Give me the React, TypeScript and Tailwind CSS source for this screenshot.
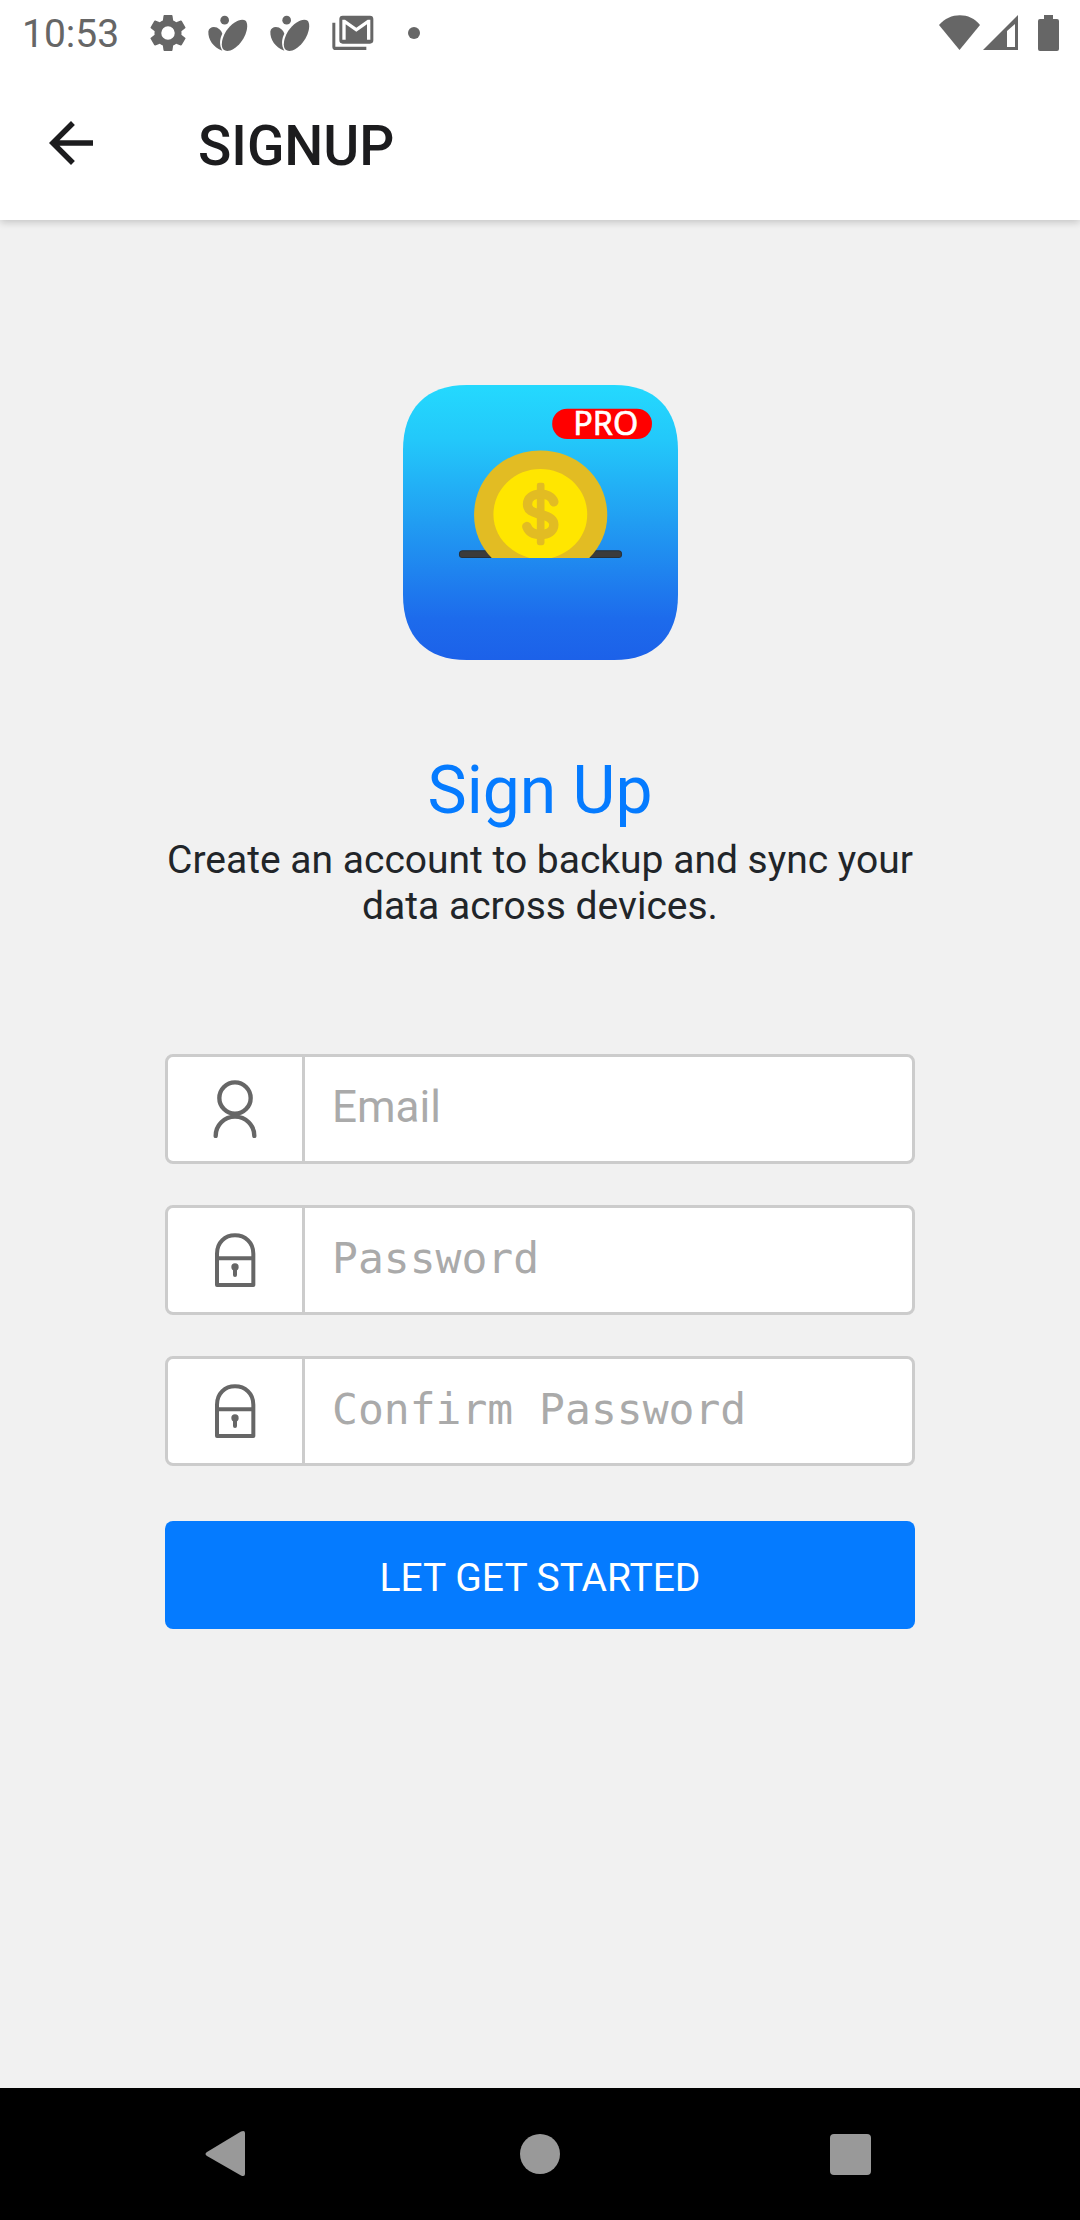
import React from "react";

const settingsPath =
  "M19.14 12.94c.04-.3.06-.61.06-.94 0-.32-.02-.64-.07-.94l2.03-1.58a.49.49 0 0 0 .12-.61l-1.92-3.32a.49.49 0 0 0-.59-.22l-2.39.96c-.5-.38-1.03-.7-1.62-.94l-.36-2.54a.48.48 0 0 0-.48-.41h-3.84c-.24 0-.43.17-.47.41l-.36 2.54c-.59.24-1.13.57-1.62.94l-2.39-.96a.48.48 0 0 0-.59.22L2.74 8.87a.47.47 0 0 0 .12.61l2.03 1.58c-.05.3-.09.63-.09.94s.02.64.07.94l-2.03 1.58a.49.49 0 0 0-.12.61l1.92 3.32c.12.22.37.29.59.22l2.39-.96c.5.38 1.03.7 1.62.94l.36 2.54c.05.24.24.41.48.41h3.84c.24 0 .44-.17.47-.41l.36-2.54c.59-.24 1.13-.56 1.62-.94l2.39.96c.22.08.47 0 .59-.22l1.92-3.32a.47.47 0 0 0-.12-.61l-2.01-1.58zM12 15.6A3.6 3.6 0 1 1 12 8.4a3.6 3.6 0 0 1 0 7.2z";

function SettingsIcon() {
  return (
    <svg viewBox="2.4 2.4 19.2 19.2" className="h-9 w-9" fill="currentColor" aria-hidden="true">
      <path d={settingsPath} />
    </svg>
  );
}

function PetalIcon() {
  return (
    <svg viewBox="629 45 120 110" className="h-[37px] w-10" fill="currentColor" aria-hidden="true">
      <circle cx="679" cy="60" r="13" />
      <path d="M672 152C645 142 629 118 630 94C632 79 652 76 664 88C668 92 671 96 672 101C664 117 662 135 672 152Z" />
      <path d="M742 62C752 75 745 103 727 127C710 149 687 158 676 149C666 139 670 114 684 92C702 65 730 52 742 62Z" />
    </svg>
  );
}

function MailStackIcon() {
  return (
    <svg viewBox="992 47 126 106" className="h-9 w-[42px]" aria-hidden="true">
      <path d="M993 69h9v72h93v10h-92q-10 0-10-10z" fill="currentColor" />
      <path
        fillRule="evenodd"
        fill="currentColor"
        d="M1024 48h82q10 0 10 10v64q0 10-10 10h-82q-10 0-10-10V58q0-10 10-10zM1023 60v60h10V74l32 22 32-22v46h10V60l-8 0-34 24-34-24z"
      />
    </svg>
  );
}

function WifiIcon() {
  return (
    <svg viewBox="0 0 42 36" className="h-9 w-[42px]" fill="currentColor" aria-hidden="true">
      <path d="M0 10C11-3 31-3 41 10L20.500 35z" />
    </svg>
  );
}

function SignalIcon() {
  return (
    <svg viewBox="0 0 36 36" className="h-9 w-9" fill="currentColor" aria-hidden="true">
      <path fillRule="evenodd" d="M35 0V35H0zM24 16v16h8V9z" />
    </svg>
  );
}

function BatteryIcon() {
  return (
    <svg viewBox="0 0 22 36" className="h-9 w-[22px]" fill="currentColor" aria-hidden="true">
      <path d="M6 0h9v4h4q2 0 2 2v28q0 2-2 2H2q-2 0-2-2V6q0-2 2-2h4z" />
    </svg>
  );
}

function StatusBar() {
  return (
    <div className="flex h-[66px] items-center justify-between pr-5 pl-[22px] text-[#666666]">
      <div className="flex items-center">
        <span className="w-[128px] pt-[2px] text-[39px] leading-[46px]">10:53</span>
        <div className="flex items-center gap-[22px]">
          <SettingsIcon />
          <PetalIcon />
          <PetalIcon />
          <MailStackIcon />
          <span className="ml-3 h-3 w-3 rounded-full bg-[#666666]" />
        </div>
      </div>
      <div className="flex items-center">
        <WifiIcon />
        <span className="ml-[2px] flex">
          <SignalIcon />
        </span>
        <span className="ml-[19px] flex">
          <BatteryIcon />
        </span>
      </div>
    </div>
  );
}

function AppLogo() {
  return (
    <svg viewBox="39 45 824 824" className="h-[275px] w-[275px]" role="img" aria-label="Money Pro">
      <defs>
        <linearGradient id="logoBg" x1="0" y1="0" x2="0" y2="1">
          <stop offset="0" stopColor="#24d9fe" />
          <stop offset="0.200" stopColor="#23c8fa" />
          <stop offset="0.500" stopColor="#219df2" />
          <stop offset="0.850" stopColor="#1d6bec" />
          <stop offset="1" stopColor="#1c61e9" />
        </linearGradient>
      </defs>
      <path
        d="M39 240C39 115 109 45 230 45H672C793 45 863 115 863 240V674C863 799 793 869 672 869H230C109 869 39 799 39 674Z"
        fill="url(#logoBg)"
      />
      <rect x="208" y="542" width="486" height="20" rx="10" fill="#3b3b3b" stroke="#26303a" strokeWidth="3" />
      <path d="M305 563C272 530 252 485 252 435C252 325 340 241 451 241C562 241 651 325 651 435C651 485 630 530 597 563Z" fill="#e2bc23" />
      <path d="M418 563C355 546 310 495 310 433C310 358 372 297 451 297C529 297 591 358 591 433C591 495 548 546 484 563Z" fill="#ffe600" />
      <rect x="440" y="338" width="23" height="187" rx="7" fill="#e2bc23" />
      <path
        d="M491 395C486 378 467 372 451 372C426 372 412 385 412 402C412 424 433 427 451 433C475 438 491 446 491 464C491 483 473 493 451 493C428 493 416 485 410 469"
        fill="none"
        stroke="#e2bc23"
        strokeWidth="28"
        strokeLinecap="round"
      />
      <rect x="486" y="116" width="299" height="91" rx="45" fill="#ff0000" />
      <text x="549" y="195" fontSize="97" fill="#ffffff" stroke="#ffffff" strokeWidth="2" fontFamily="'Noto Sans', 'Open Sans', sans-serif">
        PRO
      </text>
    </svg>
  );
}

function UserIcon() {
  return (
    <svg viewBox="189 120 132 174" className="h-[58px] w-11" fill="none" stroke="#666666" strokeWidth="13" aria-hidden="true">
      <circle cx="255" cy="174" r="47" />
      <path d="M197 288A58 58 0 0 1 313 288" strokeLinecap="round" />
    </svg>
  );
}

function LockIcon() {
  return (
    <svg viewBox="192 579 126 162" className="h-[54px] w-[42px]" fill="none" stroke="#666666" strokeWidth="12" aria-hidden="true">
      <path d="M201 735V641C201 607 225 586 255 586C285 586 310 607 310 641V735Z" strokeLinejoin="round" />
      <path d="M201 655H310" />
      <circle cx="255" cy="681" r="11" fill="#666666" stroke="none" />
      <path d="M255 681V705" strokeLinecap="round" />
    </svg>
  );
}

type FieldProps = {
  id: string;
  type: string;
  placeholder: string;
  icon: React.ReactNode;
  mono?: boolean;
};

function Field({ id, type, placeholder, icon, mono }: FieldProps) {
  return (
    <div className="flex h-[110px] rounded-lg border-3 border-[#cccccc] bg-white">
      <label htmlFor={id} aria-label={placeholder} className="flex w-[137px] shrink-0 items-center justify-center border-r-3 border-[#cccccc]">
        {icon}
      </label>
      <input
        id={id}
        type={type}
        placeholder={placeholder}
        className={
          mono
            ? "min-w-0 flex-1 bg-transparent px-[27px] pb-1 font-['DejaVu_Sans_Mono',monospace] text-[43px] text-[#212529] outline-none placeholder:text-[#aaaaaa]"
            : "min-w-0 flex-1 bg-transparent px-[27px] pb-1 text-[44px] text-[#212529] outline-none placeholder:text-[#aaaaaa]"
        }
      />
    </div>
  );
}

function NavBar() {
  return (
    <nav className="flex h-[132px] items-center bg-black px-[72px]">
      <button type="button" aria-label="Back" className="flex flex-1 justify-center">
        <svg viewBox="0 0 48 48" className="h-12 w-12" fill="#999999">
          <path d="M3 22L37 1.500Q41 0 41 3V44Q41 47 37 45.500L3 26Q0 24 3 22z" />
        </svg>
      </button>
      <button type="button" aria-label="Home" className="flex flex-1 justify-center">
        <svg viewBox="0 0 48 48" className="h-12 w-12" fill="#999999">
          <circle cx="24" cy="24" r="20" />
        </svg>
      </button>
      <button type="button" aria-label="Recent apps" className="flex flex-1 justify-center">
        <svg viewBox="0 0 48 48" className="h-12 w-12" fill="#999999">
          <rect x="2" y="4" width="41" height="41" rx="4" />
        </svg>
      </button>
    </nav>
  );
}

export default function App() {
  return (
    <div className="flex min-h-screen flex-col bg-[#f1f1f1] font-[Roboto,sans-serif]">
      <div className="bg-white shadow-[0_2px_8px_rgba(0,0,0,0.2)]">
        <StatusBar />
        <header className="flex h-[154px] items-center pl-[38px]">
          <button type="button" aria-label="Go back" className="text-[#1c1c1e]">
            <svg viewBox="0 0 24 24" className="h-[66px] w-[66px]" fill="currentColor">
              <path d="M20 11H7.830l5.590-5.590L12 4l-8 8 8 8 1.410-1.410L7.830 13H20v-2z" />
            </svg>
          </button>
          <h1 className="ml-[94px] pt-[6px] text-[55px] leading-[64px] font-medium text-[#1c1c1e]">SIGNUP</h1>
        </header>
      </div>
      <main className="flex flex-1 flex-col items-center px-[165px] pt-[165px]">
        <AppLogo />
        <h2 className="mt-[92px] text-[66px] leading-[78px] text-[#057bff]">Sign Up</h2>
        <p className="-mx-2 mt-[7px] text-center text-[39px] leading-[46px] text-[#212529]">
          Create an account to backup and sync your data across devices.
        </p>
        <form className="mt-[125px] flex w-full flex-col" onSubmit={(e) => e.preventDefault()}>
          <div className="flex flex-col gap-[41px]">
            <Field id="email" type="email" placeholder="Email" icon={<UserIcon />} />
            <Field id="password" type="password" placeholder="Password" icon={<LockIcon />} mono />
            <Field id="confirm" type="password" placeholder="Confirm Password" icon={<LockIcon />} mono />
          </div>
          <button type="submit" className="mt-[55px] h-[108px] rounded-lg bg-[#057bff] pt-[6px] text-[39px] leading-[46px] text-white">
            LET GET STARTED
          </button>
        </form>
      </main>
      <NavBar />
    </div>
  );
}
